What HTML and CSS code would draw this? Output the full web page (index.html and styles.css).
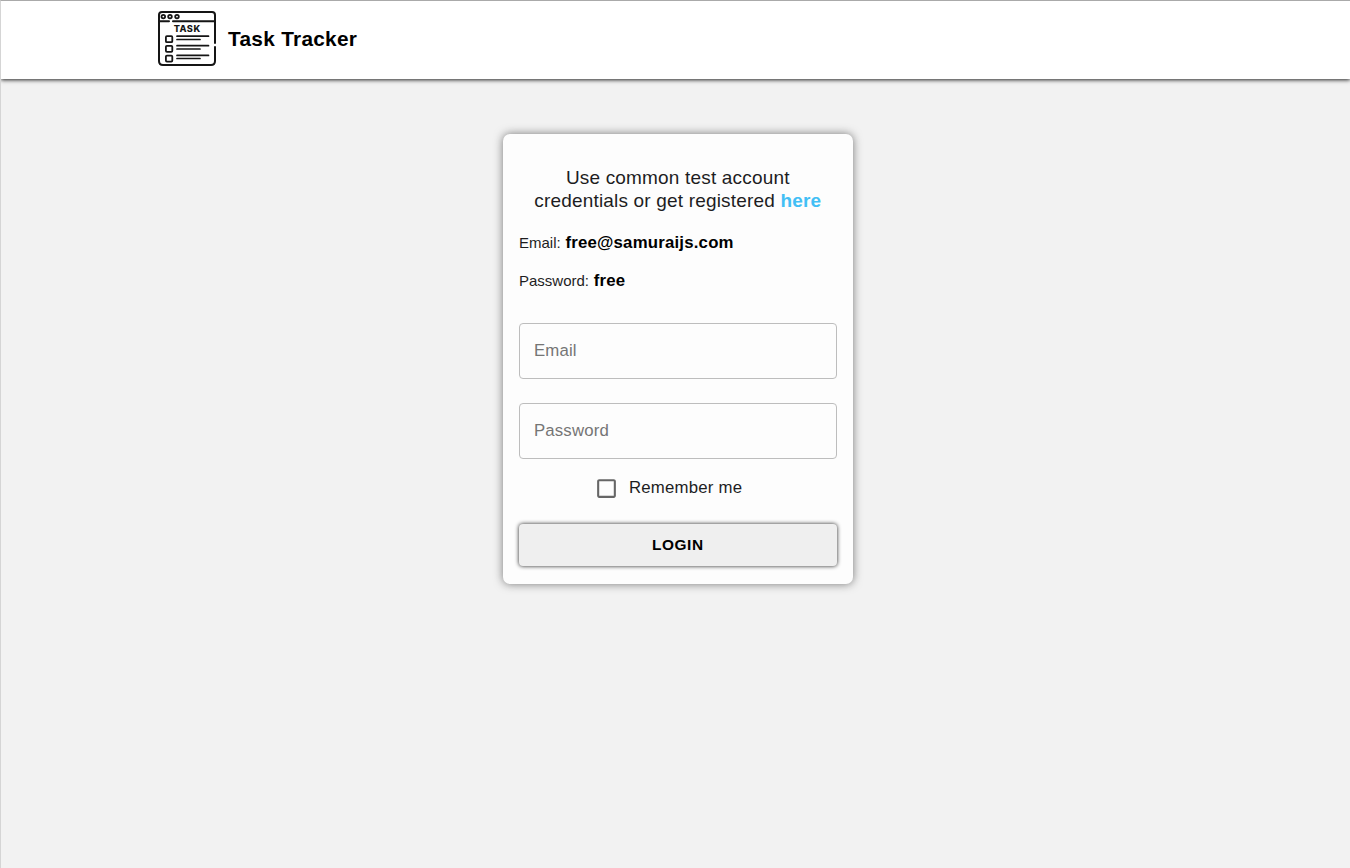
FILE: index.html
```html
<!DOCTYPE html>
<html lang="en">
<head>
<meta charset="utf-8">
<title>Task Tracker</title>
<link rel="stylesheet" href="styles.css">
</head>
<body>
<header class="header">
  <svg class="logo" viewBox="0 0 60 58" width="60" height="58" fill="none" stroke="#151515" stroke-width="2" stroke-linecap="round">
    <path d="M58 34V6Q58 3 55 3H5Q2 3 2 6V52Q2 56 6 56H54Q58 56 58 52V38M2 12.3H12M16 12.3H58"/>
    <g stroke-width="1.8"><circle cx="6.3" cy="7.6" r="1.8"/><circle cx="13" cy="7.6" r="1.8"/><circle cx="20" cy="7.6" r="1.8"/>
    <rect x="8.9" y="27.2" width="6.4" height="6" rx="1"/><rect x="8.9" y="36.8" width="6.4" height="6" rx="1"/><rect x="8.9" y="46.6" width="6.4" height="6" rx="1"/></g>
    <path stroke-width="1.7" d="M20 27.2H51.5M20 30.5H43M20 36.7H51.5M20 40H43M20 46.4H51.5M20 49.5H43"/>
    <text class="logo-text" x="16.7" y="23.4" textLength="26.5" lengthAdjust="spacing">TASK</text>
  </svg>
  <span class="brand">Task Tracker</span>
</header>
<main class="page">
  <form class="card">
    <p class="intro">Use common test account<br>credentials or get registered <a class="link">here</a></p>
    <p class="credential">Email: <b class="value">free@samuraijs.com</b></p>
    <p class="credential">Password: <b class="value">free</b></p>
    <input class="field first" type="text" placeholder="Email">
    <input class="field" type="password" placeholder="Password">
    <label class="remember"><svg width="25" height="25" viewBox="0 0 24 24"><path fill="#666" d="M19 5v14H5V5h14m0-2H5c-1.1 0-2 .9-2 2v14c0 1.1.9 2 2 2h14c1.1 0 2-.9 2-2V5c0-1.1-.9-2-2-2z"/></svg><span>Remember me</span></label>
    <button class="login" type="button">LOGIN</button>
  </form>
</main>
</body>
</html>
```
FILE: styles.css
```css
* { box-sizing: border-box; }
body {
  margin: 0;
  height: 868px;
  overflow: hidden;
  background: #f2f2f2;
  border-top: 1px solid #aaa;
  border-left: 1px solid #d5d5d5;
  font-family: "Liberation Sans", Arial, sans-serif;
  color: #1d1d1f;
}
.header {
  height: 78px;
  padding: 8px 0 0 156px;
  display: flex;
  align-items: flex-start;
  background: #fff;
  box-shadow: 0 1px 4px 0 #222;
}
.logo { flex: none; }
.logo-text { font: 800 9.2px Inter, sans-serif; fill: #151515; stroke: none; }
.brand {
  margin: 17px 0 0 11px;
  font-size: 20.8px;
  line-height: 26px;
  font-weight: 700;
  letter-spacing: .3px;
  color: #000;
}
.page { display: flex; padding: 55px 0 0 502px; }
.card {
  width: 349.6px;
  height: 450px;
  padding: 32px 16px 0;
  border-radius: 7px;
  background: #fdfdfd;
  box-shadow: 0 0 10px #777;
}
.intro {
  margin: 0;
  font-size: 19px;
  line-height: 23px;
  letter-spacing: .18px;
  text-align: center;
  white-space: nowrap;
}
.link { color: #42bff5; font-weight: 700; }
.credential { margin: 21px 0 0; font-size: 15px; line-height: 19px; }
.credential + .credential { margin-top: 19px; }
.value { margin-left: .6px; font-size: 16.8px; letter-spacing: .2px; color: #000; }
.field {
  display: block;
  width: 317.6px;
  height: 56px;
  margin: 24px 0 0;
  padding: 0 14px 1px;
  border: 1px solid #bdbdbd;
  border-radius: 4px;
  background: transparent;
  font: 16.8px "Liberation Sans", Arial, sans-serif;
  letter-spacing: .15px;
}
.field.first { margin-top: 33px; }
.field::placeholder { color: #757575; opacity: 1; }
.remember {
  display: flex;
  align-items: center;
  height: 24px;
  margin: 17px 0 0 75px;
  font-size: 16.8px;
  letter-spacing: .2px;
}
.remember span { margin-left: 10px; }
.login {
  display: block;
  width: 317.6px;
  height: 42px;
  margin: 24px 0 0;
  padding: 0 0 1px;
  border: 0;
  border-radius: 4px;
  background: #efefef;
  box-shadow: 0 0 4px #222;
  font: bold 15.4px "Liberation Sans", Arial, sans-serif;
  letter-spacing: .6px;
  color: #000;
}
```
